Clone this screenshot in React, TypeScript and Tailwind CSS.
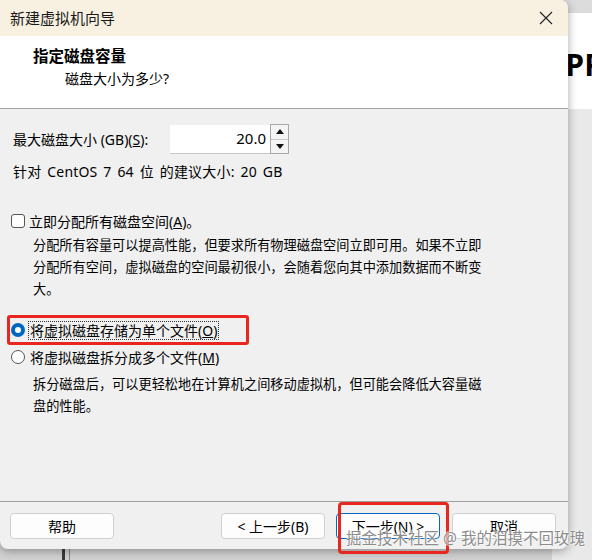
import React from "react";

const font = { fontFamily: '"Noto Sans", "Noto Sans CJK SC", sans-serif' };

function Btn({ label, primary, className }: { label: React.ReactNode; primary?: boolean; className?: string }) {
  return (
    <div
      className={
        "h-[26px] w-[104px] flex items-center justify-center rounded-[4px] bg-[#fdfdfd] text-[14px] text-black " +
        (primary ? "border border-[#0067c0]" : "border border-[#d0d0d0]") +
        " " +
        (className || "")
      }
    >
      {label}
    </div>
  );
}

export default function App() {
  return (
    <div className="relative w-[592px] h-[560px] overflow-hidden bg-[#d2d2d2]" style={font}>
      {/* background window on the right */}
      <div className="absolute right-0 top-0 w-[40px] h-[560px] bg-[#e4e4e4] overflow-hidden">
        <div className="h-[13px] bg-[#dcdcdc]" />
        <div className="h-[96px] bg-white flex items-center justify-end">
          <span className="text-[30px] font-bold text-black leading-none -mr-[12px] mt-[8px]" style={{ fontFamily: '"Open Sans", sans-serif' }}>
            PR
          </span>
        </div>
        <div className="h-[451px] bg-[#e9e9e9]" />
      </div>
      {/* background below dialog */}
      <div className="absolute left-[62px] top-[545px] w-[3px] h-[20px] bg-[#3c3c3c]" />
      <div className="absolute left-[69px] top-[545px] w-[1px] h-[20px] bg-[#8a8a8a]" />

      {/* dialog */}
      <div className="relative w-[568px] h-[549px] flex flex-col rounded-b-[8px] rounded-tr-[8px] overflow-hidden bg-[#f0f0f0] shadow-[0_2px_10px_rgba(0,0,0,0.35)]">
        {/* title bar */}
        <div className="h-[36px] bg-[#f8f1e2] flex items-center justify-between pl-[10px] pr-[12px]">
          <span className="text-[15px] text-[#1a1a1a]">新建虚拟机向导</span>
          <svg width="14" height="14" viewBox="0 0 14 14" className="mr-[3px]">
            <path d="M1 1 L13 13 M13 1 L1 13" stroke="#222" strokeWidth="1.1" />
          </svg>
        </div>
        {/* header */}
        <div className="h-[73px] bg-white border-b border-[#a0a0a0] pl-[33px] pt-[9px]">
          <div className="text-[15.5px] font-bold leading-[22px] text-black">指定磁盘容量</div>
          <div className="text-[14px] leading-[22px] text-black pl-[32px] mt-[1px]">磁盘大小为多少?</div>
        </div>
        {/* body */}
        <div className="flex-1 pl-[13px] pt-[15px] text-[14px] text-black">
          <div className="flex items-center h-[30px]">
            <span className="w-[157px]">
              最大磁盘大小 (GB)(<span className="underline">S</span>):
            </span>
            <div className="w-[100px] h-[29px] bg-white border-b border-[#c8c8c8] flex items-center justify-end pr-[4px] text-[15px]">
              20.0
            </div>
            <div className="w-[19px] h-[30px] flex flex-col border border-[#a8a8a8] bg-[#f4f4f4]">
              <div className="flex-1 flex items-center justify-center border-b border-[#c8c8c8]">
                <svg width="8" height="5" viewBox="0 0 8 5"><path d="M0 5 L4 0 L8 5 Z" fill="#111" /></svg>
              </div>
              <div className="flex-1 flex items-center justify-center">
                <svg width="8" height="5" viewBox="0 0 8 5"><path d="M0 0 L4 5 L8 0 Z" fill="#111" /></svg>
              </div>
            </div>
          </div>
          <div className="mt-[7px] h-[22px] leading-[22px] tracking-[0.2px] [word-spacing:2px]">针对 CentOS 7 64 位 的建议大小: 20 GB</div>

          {/* checkbox */}
          <div className="mt-[27px] flex items-center h-[22px]">
            <div className="w-[14px] h-[14px] rounded-[3px] border border-[#555] bg-white -ml-[2px] mr-[4px]" />
            <span>
              立即分配所有磁盘空间(<span className="underline">A</span>)。
            </span>
          </div>
          <div className="pl-[20px] text-[13.2px] leading-[22px] mt-[2px]">
            <div>分配所有容量可以提高性能，但要求所有物理磁盘空间立即可用。如果不立即</div>
            <div>分配所有空间，虚拟磁盘的空间最初很小，会随着您向其中添加数据而不断变</div>
            <div>大。</div>
          </div>

          {/* radios */}
          <div className="mt-[19px] flex items-center h-[22px] relative">
            <div className="w-[14px] h-[14px] rounded-full bg-[#0067c0] flex items-center justify-center -ml-[2px] mr-[3px]">
              <div className="w-[6px] h-[6px] rounded-full bg-white" />
            </div>
            <span className="border border-dotted border-[#333] px-[1px] leading-[17px]">
              将虚拟磁盘存储为单个文件(<span className="underline">O</span>)
            </span>
            <div className="absolute -left-[6px] -top-[4px] w-[242px] h-[30px] border-[3px] border-[#e8251f] rounded-[3px]" />
          </div>
          <div className="mt-[5px] flex items-center h-[22px]">
            <div className="w-[14px] h-[14px] rounded-full border border-[#555] bg-white -ml-[2px] mr-[5px]" />
            <span>
              将虚拟磁盘拆分成多个文件(<span className="underline">M</span>)
            </span>
          </div>
          <div className="pl-[20px] text-[13.2px] leading-[22px] mt-[5px]">
            <div>拆分磁盘后，可以更轻松地在计算机之间移动虚拟机，但可能会降低大容量磁</div>
            <div>盘的性能。</div>
          </div>
        </div>
        {/* footer */}
        <div className="h-[48px] border-t border-[#a0a0a0] flex items-start pt-[11px] pl-[10px] pr-[12px]">
          <Btn label="帮助" />
          <div className="flex-1" />
          <Btn label="< 上一步(B)" />
          <Btn label="下一步(N) >" primary className="ml-[11px]" />
          <Btn label="取消" className="ml-[12px]" />
        </div>
      </div>

      {/* red box around next */}
      <div className="absolute left-[338px] top-[502px] w-[111px] h-[52px] border-[3px] border-[#e8251f] rounded-[4px]" />

      {/* watermark */}
      <div
        className="absolute left-[346px] top-[527px] text-[15.5px] text-[#8c8c8c] whitespace-nowrap"
        style={{ textShadow: "0 0 2px #fff, 0 0 2px #fff, 0 0 1px #fff" }}
      >
        掘金技术社区 @ 我的泪摸不回玫瑰
      </div>
    </div>
  );
}
